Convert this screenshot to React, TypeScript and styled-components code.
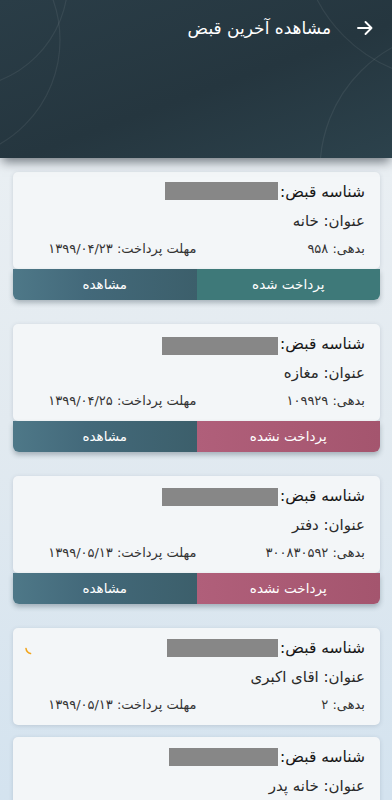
import React from "react";
import styled, { createGlobalStyle } from "styled-components";

const GlobalStyle = createGlobalStyle`
  html, body { margin: 0; padding: 0; }
  body {
    font-family: "DejaVu Sans", "Noto Sans", sans-serif;
    background: linear-gradient(180deg, #eef2f5 0%, #e2eaf0 50%, #d2e2ef 100%);
    min-height: 800px;
  }
  * { box-sizing: border-box; }
`;

const Page = styled.div`
  width: 392px;
  min-height: 800px;
  direction: rtl;
  overflow: hidden;
`;

const Header = styled.header`
  position: relative;
  height: 158px;
  background: linear-gradient(160deg, #2a3d47 0%, #25363f 55%, #2c424c 100%);
  box-shadow: 0 6px 10px -2px rgba(20, 30, 38, 0.55);
  overflow: hidden;
  z-index: 1;
`;

const Deco = styled.svg`
  position: absolute;
  inset: 0;
  pointer-events: none;
`;

const HeaderBar = styled.div`
  position: relative;
  display: flex;
  align-items: center;
  gap: 26px;
  padding: 8px 19px 0 0;
  height: 40px;
  box-sizing: content-box;
`;

const BackIcon = styled.svg`
  width: 16px;
  height: 16px;
  flex: none;
`;

const Title = styled.h1`
  margin: 0;
  color: #ffffff;
  font-size: 17px;
  font-weight: 400;
`;

const List = styled.main`
  display: flex;
  flex-direction: column;
  padding: 14px 12px 0 13px;
`;

const Card = styled.section<{ $gap: number }>`
  position: relative;
  margin-bottom: ${(p) => p.$gap}px;
`;

const Body = styled.div`
  background: #f3f6f8;
  border-radius: 5px;
  padding: 6px 15px 7px;
  box-shadow: 0 1px 4px rgba(60, 80, 100, 0.18);
`;

const TitleRow = styled.div`
  display: flex;
  align-items: center;
  gap: 2px;
  height: 28px;
  color: #151515;
  font-size: 15.5px;
`;

const Redacted = styled.span<{ $w: number; $dy: number }>`
  display: inline-block;
  width: ${(p) => p.$w}px;
  height: 18px;
  background: #878787;
  transform: translateY(${(p) => p.$dy}px);
`;

const Line = styled.div`
  height: 30px;
  line-height: 30px;
  color: #2a2a2a;
  font-size: 15px;
`;

const InfoRow = styled.div`
  display: grid;
  grid-template-columns: 1fr 1fr;
  height: 26px;
  line-height: 26px;
  color: #333;
  font-size: 13px;
`;

const Actions = styled.div`
  display: grid;
  grid-template-columns: 1fr 1fr;
  height: 31px;
  border-radius: 0 0 6px 6px;
  overflow: hidden;
  box-shadow: 0 3px 5px rgba(30, 50, 60, 0.3);
`;

const ActionButton = styled.button<{ $kind: "paid" | "unpaid" | "view" }>`
  border: none;
  margin: 0;
  padding: 0 0 2px;
  font-family: inherit;
  font-size: 13.5px;
  color: #ffffff;
  cursor: pointer;
  background: ${(p) =>
    p.$kind === "paid"
      ? "#3e7979"
      : p.$kind === "unpaid"
      ? "linear-gradient(90deg, #b05f7a 0%, #a4556e 100%)"
      : "linear-gradient(270deg, #3c5f6b 0%, #43697a 60%, #4e7888 100%)"};
`;

const Spinner = styled.svg`
  position: absolute;
  left: 11px;
  top: 18px;
  width: 10px;
  height: 10px;
`;

type Bill = {
  title: string;
  debt: string;
  due: string;
  status?: "paid" | "unpaid";
  box: number;
  dy: number;
  loading?: boolean;
};

const bills: Bill[] = [
  { title: "خانه", debt: "۹۵۸", due: "۱۳۹۹/۰۴/۲۳", status: "paid", box: 113, dy: -1 },
  { title: "مغازه", debt: "۱۰۹۹۲۹", due: "۱۳۹۹/۰۴/۲۵", status: "unpaid", box: 116, dy: 2 },
  { title: "دفتر", debt: "۳۰۰۸۳۰۵۹۲", due: "۱۳۹۹/۰۵/۱۳", status: "unpaid", box: 116, dy: 1 },
  { title: "اقای اکبری", debt: "۲", due: "۱۳۹۹/۰۵/۱۳", box: 111, dy: 0, loading: true },
  { title: "خانه پدر", debt: "۱۲۰۰", due: "۱۳۹۹/۰۵/۲۰", box: 109, dy: 0 },
];

export default function App() {
  return (
    <>
      <GlobalStyle />
      <Page>
        <Header>
          <Deco viewBox="0 0 392 158" width="392" height="158">
            <g fill="none" stroke="rgba(255,255,255,0.07)" strokeWidth="1.2">
              <circle cx="-40" cy="-20" r="108" />
              <circle cx="-60" cy="40" r="120" />
              <circle cx="450" cy="-70" r="150" />
              <circle cx="460" cy="170" r="140" />
            </g>
          </Deco>
          <HeaderBar>
            <BackIcon viewBox="0 0 16 16">
              <path
                d="M1 8h13.5M8.5 2l6 6-6 6"
                fill="none"
                stroke="#ffffff"
                strokeWidth="1.9"
                strokeLinecap="round"
                strokeLinejoin="round"
              />
            </BackIcon>
            <Title>مشاهده آخرین قبض</Title>
          </HeaderBar>
        </Header>
        <List>
          {bills.map((b, i) => (
            <Card key={i} $gap={b.status ? 24 : 12}>
              <Body>
                <TitleRow>
                  <span>شناسه قبض:</span>
                  <Redacted $w={b.box} $dy={b.dy} />
                </TitleRow>
                <Line>عنوان: {b.title}</Line>
                <InfoRow>
                  <span>بدهی: {b.debt}</span>
                  <span>مهلت پرداخت: {b.due}</span>
                </InfoRow>
              </Body>
              {b.status && (
                <Actions>
                  <ActionButton $kind={b.status}>
                    {b.status === "paid" ? "پرداخت شده" : "پرداخت نشده"}
                  </ActionButton>
                  <ActionButton $kind="view">مشاهده</ActionButton>
                </Actions>
              )}
              {b.loading && (
                <Spinner viewBox="0 0 10 10">
                  <path
                    d="M2 2.5 A6 6 0 0 0 6.5 7.5"
                    fill="none"
                    stroke="#f2a51c"
                    strokeWidth="1.6"
                    strokeLinecap="round"
                  />
                </Spinner>
              )}
            </Card>
          ))}
        </List>
      </Page>
    </>
  );
}
